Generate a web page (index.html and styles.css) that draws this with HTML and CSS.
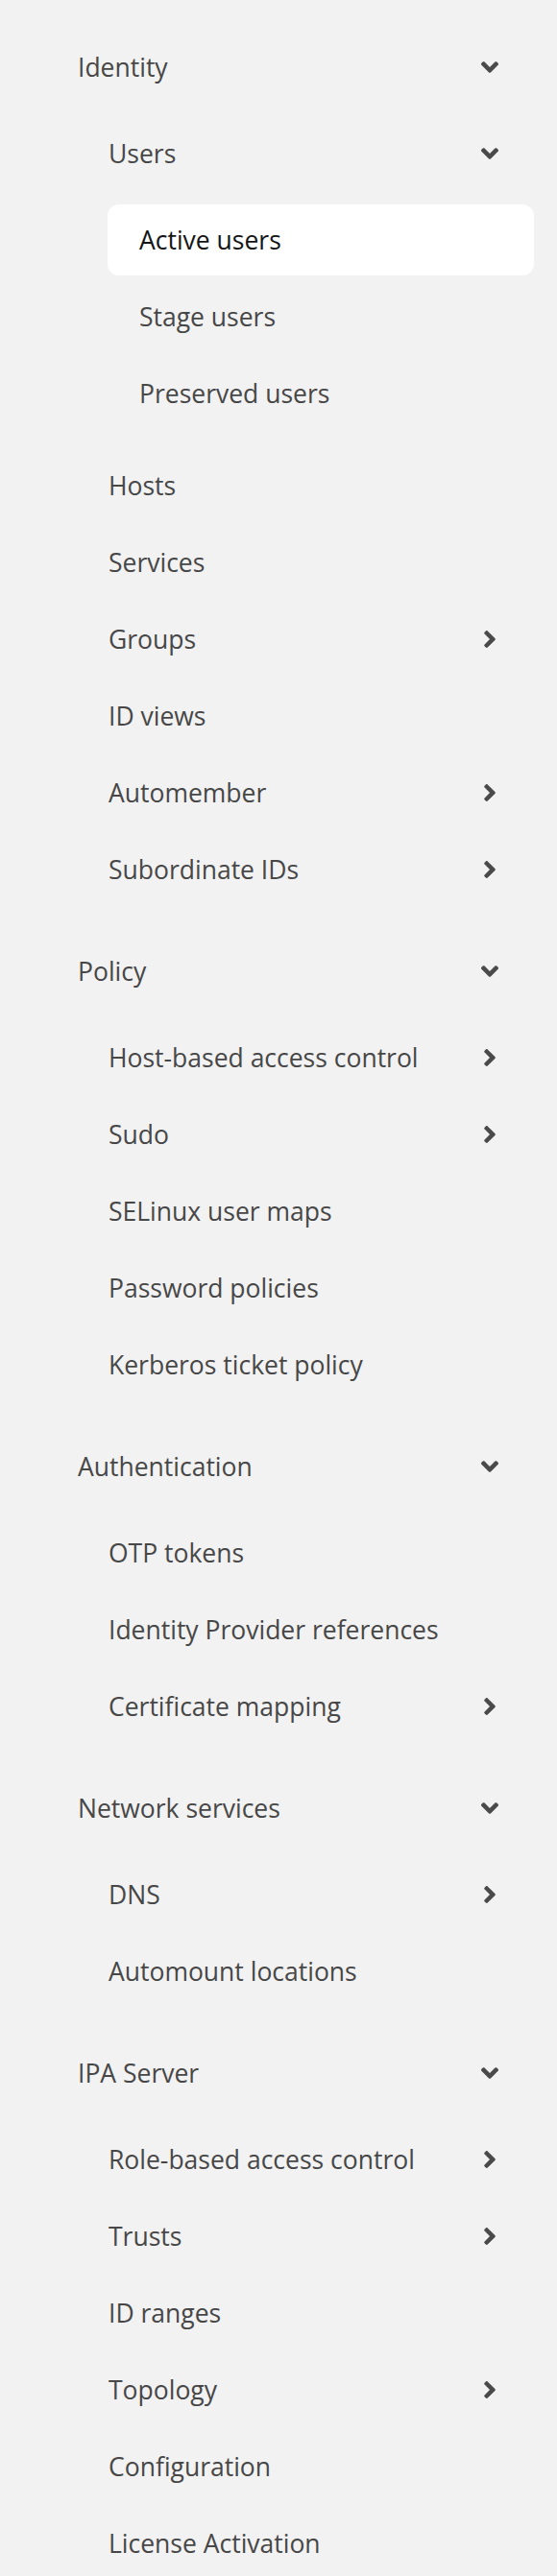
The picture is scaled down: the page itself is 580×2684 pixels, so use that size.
FILE: index.html
```html
<!DOCTYPE html>
<html lang="en">
<head>
<meta charset="utf-8">
<title>Navigation</title>
<link rel="stylesheet" href="styles.css">
</head>
<body>
<nav class="nav">
  <ul class="nav-list">
    <li class="section">
      <div class="row toggle open"><span class="label">Identity</span><span class="icon"><svg class="chev" viewBox="22 96 212 320"><path d="M224.3 273l-136 136c-9.4 9.4-24.6 9.4-33.9 0l-22.6-22.6c-9.4-9.4-9.4-24.6 0-33.9l96.4-96.4-96.4-96.4c-9.4-9.4-9.4-24.6 0-33.9L54.3 103c9.4-9.4 24.6-9.4 33.9 0l136 136c9.5 9.4 9.5 24.6.1 34z"/></svg></span></div>
      <ul class="subnav">
        <li>
          <div class="row toggle open"><span class="label">Users</span><span class="icon"><svg class="chev" viewBox="22 96 212 320"><path d="M224.3 273l-136 136c-9.4 9.4-24.6 9.4-33.9 0l-22.6-22.6c-9.4-9.4-9.4-24.6 0-33.9l96.4-96.4-96.4-96.4c-9.4-9.4-9.4-24.6 0-33.9L54.3 103c9.4-9.4 24.6-9.4 33.9 0l136 136c9.5 9.4 9.5 24.6.1 34z"/></svg></span></div>
          <ul class="subnav">
            <li><a class="row link current">Active users</a></li>
            <li><a class="row link">Stage users</a></li>
            <li><a class="row link">Preserved users</a></li>
          </ul>
        </li>
        <li><a class="row link">Hosts</a></li>
        <li><a class="row link">Services</a></li>
        <li><div class="row toggle"><span class="label">Groups</span><span class="icon"><svg class="chev" viewBox="22 96 212 320"><path d="M224.3 273l-136 136c-9.4 9.4-24.6 9.4-33.9 0l-22.6-22.6c-9.4-9.4-9.4-24.6 0-33.9l96.4-96.4-96.4-96.4c-9.4-9.4-9.4-24.6 0-33.9L54.3 103c9.4-9.4 24.6-9.4 33.9 0l136 136c9.5 9.4 9.5 24.6.1 34z"/></svg></span></div></li>
        <li><a class="row link">ID views</a></li>
        <li><div class="row toggle"><span class="label">Automember</span><span class="icon"><svg class="chev" viewBox="22 96 212 320"><path d="M224.3 273l-136 136c-9.4 9.4-24.6 9.4-33.9 0l-22.6-22.6c-9.4-9.4-9.4-24.6 0-33.9l96.4-96.4-96.4-96.4c-9.4-9.4-9.4-24.6 0-33.9L54.3 103c9.4-9.4 24.6-9.4 33.9 0l136 136c9.5 9.4 9.5 24.6.1 34z"/></svg></span></div></li>
        <li><div class="row toggle"><span class="label">Subordinate IDs</span><span class="icon"><svg class="chev" viewBox="22 96 212 320"><path d="M224.3 273l-136 136c-9.4 9.4-24.6 9.4-33.9 0l-22.6-22.6c-9.4-9.4-9.4-24.6 0-33.9l96.4-96.4-96.4-96.4c-9.4-9.4-9.4-24.6 0-33.9L54.3 103c9.4-9.4 24.6-9.4 33.9 0l136 136c9.5 9.4 9.5 24.6.1 34z"/></svg></span></div></li>
      </ul>
    </li>
    <li class="section">
      <div class="row toggle open"><span class="label">Policy</span><span class="icon"><svg class="chev" viewBox="22 96 212 320"><path d="M224.3 273l-136 136c-9.4 9.4-24.6 9.4-33.9 0l-22.6-22.6c-9.4-9.4-9.4-24.6 0-33.9l96.4-96.4-96.4-96.4c-9.4-9.4-9.4-24.6 0-33.9L54.3 103c9.4-9.4 24.6-9.4 33.9 0l136 136c9.5 9.4 9.5 24.6.1 34z"/></svg></span></div>
      <ul class="subnav">
        <li><div class="row toggle"><span class="label">Host-based access control</span><span class="icon"><svg class="chev" viewBox="22 96 212 320"><path d="M224.3 273l-136 136c-9.4 9.4-24.6 9.4-33.9 0l-22.6-22.6c-9.4-9.4-9.4-24.6 0-33.9l96.4-96.4-96.4-96.4c-9.4-9.4-9.4-24.6 0-33.9L54.3 103c9.4-9.4 24.6-9.4 33.9 0l136 136c9.5 9.4 9.5 24.6.1 34z"/></svg></span></div></li>
        <li><div class="row toggle"><span class="label">Sudo</span><span class="icon"><svg class="chev" viewBox="22 96 212 320"><path d="M224.3 273l-136 136c-9.4 9.4-24.6 9.4-33.9 0l-22.6-22.6c-9.4-9.4-9.4-24.6 0-33.9l96.4-96.4-96.4-96.4c-9.4-9.4-9.4-24.6 0-33.9L54.3 103c9.4-9.4 24.6-9.4 33.9 0l136 136c9.5 9.4 9.5 24.6.1 34z"/></svg></span></div></li>
        <li><a class="row link">SELinux user maps</a></li>
        <li><a class="row link">Password policies</a></li>
        <li><a class="row link">Kerberos ticket policy</a></li>
      </ul>
    </li>
    <li class="section">
      <div class="row toggle open"><span class="label">Authentication</span><span class="icon"><svg class="chev" viewBox="22 96 212 320"><path d="M224.3 273l-136 136c-9.4 9.4-24.6 9.4-33.9 0l-22.6-22.6c-9.4-9.4-9.4-24.6 0-33.9l96.4-96.4-96.4-96.4c-9.4-9.4-9.4-24.6 0-33.9L54.3 103c9.4-9.4 24.6-9.4 33.9 0l136 136c9.5 9.4 9.5 24.6.1 34z"/></svg></span></div>
      <ul class="subnav">
        <li><a class="row link">OTP tokens</a></li>
        <li><a class="row link">Identity Provider references</a></li>
        <li><div class="row toggle"><span class="label">Certificate mapping</span><span class="icon"><svg class="chev" viewBox="22 96 212 320"><path d="M224.3 273l-136 136c-9.4 9.4-24.6 9.4-33.9 0l-22.6-22.6c-9.4-9.4-9.4-24.6 0-33.9l96.4-96.4-96.4-96.4c-9.4-9.4-9.4-24.6 0-33.9L54.3 103c9.4-9.4 24.6-9.4 33.9 0l136 136c9.5 9.4 9.5 24.6.1 34z"/></svg></span></div></li>
      </ul>
    </li>
    <li class="section">
      <div class="row toggle open"><span class="label">Network services</span><span class="icon"><svg class="chev" viewBox="22 96 212 320"><path d="M224.3 273l-136 136c-9.4 9.4-24.6 9.4-33.9 0l-22.6-22.6c-9.4-9.4-9.4-24.6 0-33.9l96.4-96.4-96.4-96.4c-9.4-9.4-9.4-24.6 0-33.9L54.3 103c9.4-9.4 24.6-9.4 33.9 0l136 136c9.5 9.4 9.5 24.6.1 34z"/></svg></span></div>
      <ul class="subnav">
        <li><div class="row toggle"><span class="label">DNS</span><span class="icon"><svg class="chev" viewBox="22 96 212 320"><path d="M224.3 273l-136 136c-9.4 9.4-24.6 9.4-33.9 0l-22.6-22.6c-9.4-9.4-9.4-24.6 0-33.9l96.4-96.4-96.4-96.4c-9.4-9.4-9.4-24.6 0-33.9L54.3 103c9.4-9.4 24.6-9.4 33.9 0l136 136c9.5 9.4 9.5 24.6.1 34z"/></svg></span></div></li>
        <li><a class="row link">Automount locations</a></li>
      </ul>
    </li>
    <li class="section">
      <div class="row toggle open"><span class="label">IPA Server</span><span class="icon"><svg class="chev" viewBox="22 96 212 320"><path d="M224.3 273l-136 136c-9.4 9.4-24.6 9.4-33.9 0l-22.6-22.6c-9.4-9.4-9.4-24.6 0-33.9l96.4-96.4-96.4-96.4c-9.4-9.4-9.4-24.6 0-33.9L54.3 103c9.4-9.4 24.6-9.4 33.9 0l136 136c9.5 9.4 9.5 24.6.1 34z"/></svg></span></div>
      <ul class="subnav">
        <li><div class="row toggle"><span class="label">Role-based access control</span><span class="icon"><svg class="chev" viewBox="22 96 212 320"><path d="M224.3 273l-136 136c-9.4 9.4-24.6 9.4-33.9 0l-22.6-22.6c-9.4-9.4-9.4-24.6 0-33.9l96.4-96.4-96.4-96.4c-9.4-9.4-9.4-24.6 0-33.9L54.3 103c9.4-9.4 24.6-9.4 33.9 0l136 136c9.5 9.4 9.5 24.6.1 34z"/></svg></span></div></li>
        <li><div class="row toggle"><span class="label">Trusts</span><span class="icon"><svg class="chev" viewBox="22 96 212 320"><path d="M224.3 273l-136 136c-9.4 9.4-24.6 9.4-33.9 0l-22.6-22.6c-9.4-9.4-9.4-24.6 0-33.9l96.4-96.4-96.4-96.4c-9.4-9.4-9.4-24.6 0-33.9L54.3 103c9.4-9.4 24.6-9.4 33.9 0l136 136c9.5 9.4 9.5 24.6.1 34z"/></svg></span></div></li>
        <li><a class="row link">ID ranges</a></li>
        <li><div class="row toggle"><span class="label">Topology</span><span class="icon"><svg class="chev" viewBox="22 96 212 320"><path d="M224.3 273l-136 136c-9.4 9.4-24.6 9.4-33.9 0l-22.6-22.6c-9.4-9.4-9.4-24.6 0-33.9l96.4-96.4-96.4-96.4c-9.4-9.4-9.4-24.6 0-33.9L54.3 103c9.4-9.4 24.6-9.4 33.9 0l136 136c9.5 9.4 9.5 24.6.1 34z"/></svg></span></div></li>
        <li><a class="row link">Configuration</a></li>
        <li><a class="row link">License Activation</a></li>
      </ul>
    </li>
  </ul>
</nav>
</body>
</html>
```

FILE: styles.css
```css
html, body {
  margin: 0;
  padding: 0;
  background: #f2f2f2;
}

body {
  font-family: "Open Sans", "Noto Sans", "DejaVu Sans", sans-serif;
  font-size: 26.5px;
  color: #474747;
}

.nav {
  padding: 33px 24px 0 48px;
}

.nav-list,
.subnav {
  list-style: none;
  margin: 0;
  display: flex;
  flex-direction: column;
}

.nav-list {
  padding: 0;
  gap: 16px;
}

.subnav {
  gap: 6px;
  padding: 16px 0 16px 32px;
}

.row {
  display: flex;
  align-items: center;
  justify-content: space-between;
  box-sizing: border-box;
  height: 74px;
  padding: 0 34px 0 33px;
  line-height: 42px;
  color: #474747;
  text-decoration: none;
  border-radius: 12px;
  white-space: nowrap;
}

.link.current {
  background: #ffffff;
  color: #151515;
}

.icon {
  display: flex;
  align-items: center;
  justify-content: center;
  width: 24px;
  height: 24px;
}

.chev {
  width: 12px;
  height: 18px;
  fill: #4a4a4a;
}

.toggle.open .chev {
  transform: rotate(90deg);
}
```
